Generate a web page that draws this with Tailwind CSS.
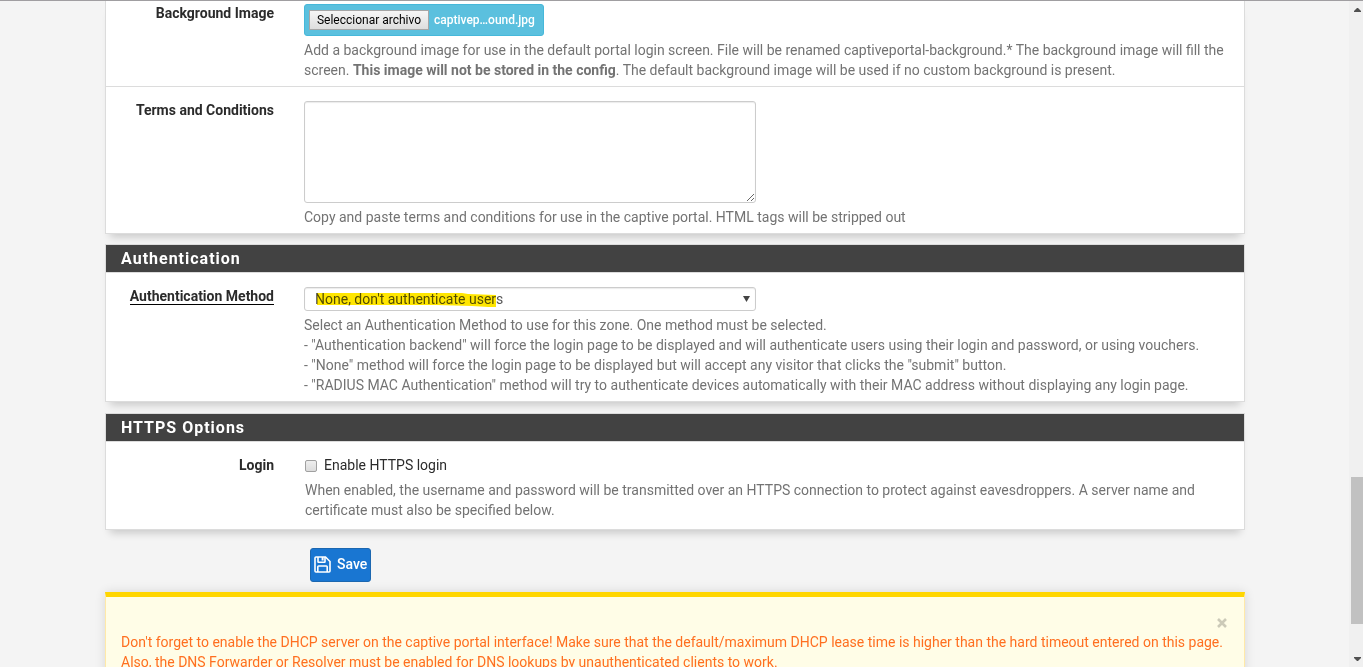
<!DOCTYPE html>
<html lang="en">
<head>
<meta charset="utf-8">
<meta name="viewport" content="width=device-width, initial-scale=1">
<title>Captive Portal</title>
<script src="https://cdn.jsdelivr.net/npm/@tailwindcss/browser@4"></script>
</head>
<body class="flex h-screen overflow-hidden border-t border-[#a09ea1] bg-[#f4f4f4] font-[Roboto,sans-serif] text-sm/5 text-[#2b2b2b]">
<main class="min-w-0 flex-1 overflow-hidden pl-px">
  <form class="mx-auto max-w-[1140px]">
    <section class="border border-t-0 border-[#dcdcdc] bg-white shadow-[0_8px_8px_-5px_rgba(0,0,0,0.18)]">
      <div class="flex gap-[30px] pr-[15px] pb-1.5">
        <label for="bg" class="mt-0.5 w-[168px] shrink-0 text-right font-bold">Background Image</label>
        <div class="mt-[3px] min-w-0 flex-1">
          <label for="bg" class="flex h-8 w-60 items-center gap-[5px] rounded-[3px] border border-[#46b8da] bg-[#5bc0de] pl-1 text-xs font-medium text-white">
            <input id="bg" type="file" class="sr-only">
            <span class="flex h-5 w-30 items-center justify-center border border-[#a6a6a6] bg-linear-to-b from-[#f6f6f6] to-[#dedede] font-normal text-black">Seleccionar archivo</span>
            <span>captivep…ound.jpg</span>
          </label>
          <p class="mt-1 text-[#737373]">Add a background image for use in the default portal login screen. File will be renamed captiveportal-background.* The background image will fill the screen. <b>This image will not be stored in the config</b>. The default background image will be used if no custom background is present.</p>
        </div>
      </div>
      <div class="flex gap-[30px] border-t border-[#dcdcdc] pr-[15px] pb-1.5">
        <label for="terms" class="mt-[13px] w-[168px] shrink-0 text-right font-bold">Terms and Conditions</label>
        <div class="mt-3.5 min-w-0 flex-1">
          <textarea id="terms" class="block h-[102px] w-[452px] max-w-full rounded-[3px] border border-[#cccccc] p-2 shadow-[inset_0_1px_1px_rgba(0,0,0,0.08)]"></textarea>
          <p class="mt-1 text-[#737373]">Copy and paste terms and conditions for use in the captive portal. HTML tags will be stripped out</p>
        </div>
      </div>
    </section>

    <section class="mt-2.5 border border-[#dcdcdc] bg-white shadow-[0_8px_8px_-5px_rgba(0,0,0,0.18)]">
      <h2 class="h-7 border-b border-[#dcdcdc] bg-[#424242] pl-[15px] text-base/7 font-bold tracking-[1px] text-white">Authentication</h2>
      <div class="flex gap-[30px] pr-[15px] pb-1.5">
        <div class="mt-[13px] w-[168px] shrink-0 text-right"><label for="method" class="inline-block border-b border-black font-bold leading-4">Authentication Method</label></div>
        <div class="mt-3.5 min-w-0 flex-1">
          <div class="relative w-[452px] max-w-full">
            <select id="method" class="block h-6 w-full appearance-none rounded-[3px] border border-[#cccccc] bg-white pl-2.5 text-sm/5 text-[#555555] shadow-[inset_0_1px_1px_rgba(0,0,0,0.08)]"><option>None, don't authenticate users</option></select>
            <svg class="pointer-events-none absolute top-[5px] left-3 h-4 w-[180px] mix-blend-multiply" viewBox="0 0 180 16" aria-hidden="true"><path d="M1 1H146L152 2L180 3V15H172L156 14L120 13H1Z" fill="#ffe600"/></svg>
            <svg class="pointer-events-none absolute top-[9px] right-1.5 h-[6px] w-[7px]" viewBox="0 0 7 6" aria-hidden="true"><path d="M0 0H7L3.5 6Z" fill="#444"/></svg>
          </div>
          <p class="mt-1 text-[#737373]">Select an Authentication Method to use for this zone. One method must be selected.<br>- "Authentication backend" will force the login page to be displayed and will authenticate users using their login and password, or using vouchers.<br>- "None" method will force the login page to be displayed but will accept any visitor that clicks the "submit" button.<br>- "RADIUS MAC Authentication" method will try to authenticate devices automatically with their MAC address without displaying any login page.</p>
        </div>
      </div>
    </section>

    <section class="mt-[11px] border border-[#dcdcdc] bg-white shadow-[0_8px_8px_-5px_rgba(0,0,0,0.18)]">
      <h2 class="h-7 border-b border-[#dcdcdc] bg-[#424242] pl-[15px] text-base/7 font-bold tracking-[1px] text-white">HTTPS Options</h2>
      <div class="flex gap-[31px] pt-[13px] pr-[15px] pb-[9px]">
        <div class="w-[168px] shrink-0 text-right font-bold">Login</div>
        <div class="min-w-0 flex-1">
          <label for="https" class="flex items-center gap-[7px]"><input id="https" type="checkbox" class="mt-0.5 size-3 appearance-none rounded-xs border border-[#a0a0a0] bg-linear-to-b from-[#eeeeee] to-[#dcdcdc]">Enable HTTPS login</label>
          <p class="mt-[5px] text-[#737373]">When enabled, the username and password will be transmitted over an HTTPS connection to protect against eavesdroppers. A server name and certificate must also be specified below.</p>
        </div>
      </div>
    </section>

    <button type="submit" class="mt-[18px] ml-[205px] flex h-[34px] items-center gap-1.5 rounded-[3px] border border-[#1c67b0] bg-[#1976d2] px-[3px] pb-0.5 font-medium text-white">
      <svg class="size-[17px]" viewBox="0 0 17 17" fill="none" stroke="currentColor" stroke-width="1.6" aria-hidden="true"><path d="M1 2Q1 1 2 1H11.5L16 5.5V15Q16 16 15 16H2Q1 16 1 15Z"/><path d="M4 1V5.7Q4 6.2 4.5 6.2H10.5Q11 6.2 11 5.7V1"/><path d="M8.6 1V4.5" stroke-width="2"/><path d="M3.8 16V10.8Q3.8 10 4.6 10H12.4Q13.2 10 13.2 10.8V16"/></svg>
      Save
    </button>

    <div role="alert" class="mt-2.5 border-x border-t-5 border-x-[#ffe9a8] border-t-[#ffd600] bg-[#fffde7] px-[15px] pt-[15px] pb-10 text-[#ff6f20] shadow-[0_0_10px_rgba(0,0,0,0.12)]">
      <div class="flex h-5 justify-end"><button type="button" aria-label="Close" class="w-3.5 text-black/20"><svg class="mt-0.5 size-3.5" viewBox="0 0 14 14" fill="none" stroke="currentColor" stroke-width="2.6" aria-hidden="true"><path d="M3 3L11 11M11 3L3 11"/></svg></button></div>
      <p>Don't forget to enable the DHCP server on the captive portal interface! Make sure that the default/maximum DHCP lease time is higher than the hard timeout entered on this page. Also, the DNS Forwarder or Resolver must be enabled for DNS lookups by unauthenticated clients to work.</p>
    </div>
  </form>
</main>
<!-- Scroll bar -->
<div class="flex w-3.5 shrink-0 flex-col bg-[#f0f0f0] pl-0.5" aria-hidden="true">
  <svg class="mt-[7px] ml-[3px] h-1 w-[7px]" viewBox="0 0 7 4"><path d="M3 0H4L7 3V4H0V3Z" fill="#505050"/></svg>
  <div class="grow-[465]"></div>
  <div class="h-[147px] bg-[#c1c1c1]"></div>
  <div class="grow-[33]"></div>
  <svg class="mb-1.5 ml-[3px] h-1 w-[7px]" viewBox="0 0 7 4"><path d="M3 4H4L7 1V0H0V1Z" fill="#505050"/></svg>
</div>
</body>
</html>
